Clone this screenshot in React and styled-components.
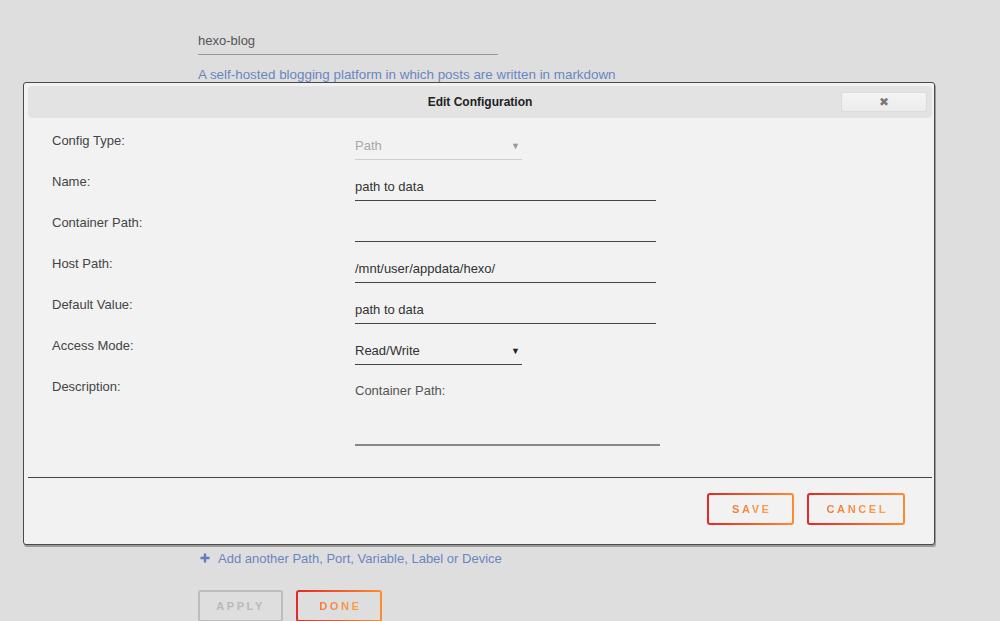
import React from "react";
import styled, { createGlobalStyle } from "styled-components";

const GlobalStyle = createGlobalStyle`
  html, body {
    margin: 0;
    padding: 0;
    background: #dedede;
    font-family: "Liberation Sans", Arial, sans-serif;
    font-size: 13px;
    color: #444;
  }
`;

const Page = styled.div`
  position: relative;
  width: 1000px;
  height: 621px;
  overflow: hidden;
`;

const PageForm = styled.div`
  display: flex;
  flex-direction: column;
  padding: 27px 0 0 198px;
`;

const PageInput = styled.div`
  width: 300px;
  height: 27px;
  line-height: 27px;
  border-bottom: 1px solid #999;
  color: #555;
`;

const Overview = styled.div`
  margin-top: 12px;
  line-height: 16px;
  font-size: 13.4px;
  color: #6a86c2;
`;

const ConfigList = styled.div`
  height: 466px;
`;

const AddLink = styled.div`
  display: flex;
  align-items: center;
  gap: 8px;
  height: 18px;
  padding-left: 2px;
  font-size: 13px;
  color: #6a86c2;
`;

const ButtonRow = styled.div`
  display: flex;
  gap: 13px;
  margin-top: 23px;
`;

const GradientButton = styled.div`
  box-sizing: border-box;
  display: flex;
  align-items: center;
  justify-content: center;
  width: ${(p) => p.$w}px;
  height: 32px;
  border: 2px solid transparent;
  border-radius: 3px;
  background: linear-gradient(${(p) => p.$bg || "#f2f2f2"}, ${(p) => p.$bg || "#f2f2f2"}) padding-box,
    linear-gradient(90deg, #e22828, #ff8c2f) border-box;
`;

const GradientText = styled.span`
  font-size: 11px;
  font-weight: bold;
  letter-spacing: 2.6px;
  margin-right: -2.6px;
  background: linear-gradient(90deg, #f27a3a, #ffa04a);
  -webkit-background-clip: text;
  background-clip: text;
  color: transparent;
`;

const DisabledButton = styled.div`
  box-sizing: border-box;
  display: flex;
  align-items: center;
  justify-content: center;
  width: 85px;
  height: 32px;
  border: 2px solid #bdbdbd;
  border-radius: 3px;
  color: #b9b9b9;
  font-size: 11px;
  font-weight: bold;
  letter-spacing: 2.6px;
`;

const Dialog = styled.div`
  position: absolute;
  left: 23px;
  top: 82px;
  width: 912px;
  box-sizing: border-box;
  padding: 3px 2px 0 4px;
  background: #f2f2f2;
  border: 1px solid #4a4a4a;
  border-radius: 3px;
  box-shadow: 1px 2px 0 #9a9a9a;
`;

const TitleBar = styled.div`
  position: relative;
  display: flex;
  align-items: center;
  justify-content: center;
  height: 32px;
  background: #e3e3e3;
  border-radius: 4px;
`;

const Title = styled.span`
  font-size: 12px;
  font-weight: bold;
  color: #222;
`;

const CloseButton = styled.div`
  position: absolute;
  right: 5px;
  top: 6px;
  width: 84px;
  height: 18px;
  display: flex;
  align-items: center;
  justify-content: center;
  border: 1px solid #dcdcdc;
  border-radius: 3px;
  background: linear-gradient(#f4f4f4, #ebebeb);
  color: #7a7a7a;
  font-family: "DejaVu Sans", sans-serif;
  font-size: 12px;
`;

const Body = styled.div`
  display: grid;
  grid-template-columns: 303px 1fr;
  grid-template-rows: repeat(6, 41px) 69px;
  padding: 13px 0 31px 24px;
`;

const Label = styled.div`
  line-height: 20px;
  color: #444;
`;

const Field = styled.div`
  box-sizing: border-box;
  display: flex;
  align-items: center;
  justify-content: space-between;
  width: ${(p) => p.$w}px;
  height: 28px;
  margin-top: 1px;
  border-bottom: 1px solid ${(p) => (p.$disabled ? "#cfcfcf" : "#444")};
  color: ${(p) => (p.$disabled ? "#a8a8a8" : "#333")};
`;

const Caret = styled.span`
  font-size: 9px;
  margin-right: 2px;
  color: ${(p) => (p.$disabled ? "#999" : "#222")};
`;

const TextArea = styled.div`
  box-sizing: border-box;
  width: 305px;
  height: 69px;
  padding-top: 4px;
  line-height: 20px;
  border-bottom: 2px solid #888;
  color: #555;
`;

const Separator = styled.div`
  height: 1px;
  background: #444;
`;

const Footer = styled.div`
  display: flex;
  justify-content: flex-end;
  gap: 13px;
  padding: 15px 27px 19px 0;
`;

const rows = [
  { label: "Config Type:", value: "Path", select: true, disabled: true, w: 167 },
  { label: "Name:", value: "path to data", w: 301 },
  { label: "Container Path:", value: "", w: 301 },
  { label: "Host Path:", value: "/mnt/user/appdata/hexo/", w: 301 },
  { label: "Default Value:", value: "path to data", w: 301 },
  { label: "Access Mode:", value: "Read/Write", select: true, w: 167 },
];

function PlusIcon() {
  return (
    <svg width="10" height="10" viewBox="0 0 10 10">
      <path d="M5 0.5v9M0.5 5h9" stroke="#5f7dbd" strokeWidth="2.4" />
    </svg>
  );
}

export default function App() {
  return (
    <Page>
      <GlobalStyle />
      <PageForm>
        <PageInput>hexo-blog</PageInput>
        <Overview>A self-hosted blogging platform in which posts are written in markdown</Overview>
        <ConfigList />
        <AddLink>
          <PlusIcon />
          <span>Add another Path, Port, Variable, Label or Device</span>
        </AddLink>
        <ButtonRow>
          <DisabledButton>APPLY</DisabledButton>
          <GradientButton $w={86} $bg="#dedede">
            <GradientText>DONE</GradientText>
          </GradientButton>
        </ButtonRow>
      </PageForm>

      <Dialog>
        <TitleBar>
          <Title>Edit Configuration</Title>
          <CloseButton>✖</CloseButton>
        </TitleBar>
        <Body>
          {rows.map((r) => (
            <React.Fragment key={r.label}>
              <Label>{r.label}</Label>
              <div>
                <Field $w={r.w} $disabled={r.disabled}>
                  <span>{r.value}</span>
                  {r.select && <Caret $disabled={r.disabled}>▼</Caret>}
                </Field>
              </div>
            </React.Fragment>
          ))}
          <Label>Description:</Label>
          <TextArea>Container Path:</TextArea>
        </Body>
        <Separator />
        <Footer>
          <GradientButton $w={87}>
            <GradientText>SAVE</GradientText>
          </GradientButton>
          <GradientButton $w={98}>
            <GradientText>CANCEL</GradientText>
          </GradientButton>
        </Footer>
      </Dialog>
    </Page>
  );
}
